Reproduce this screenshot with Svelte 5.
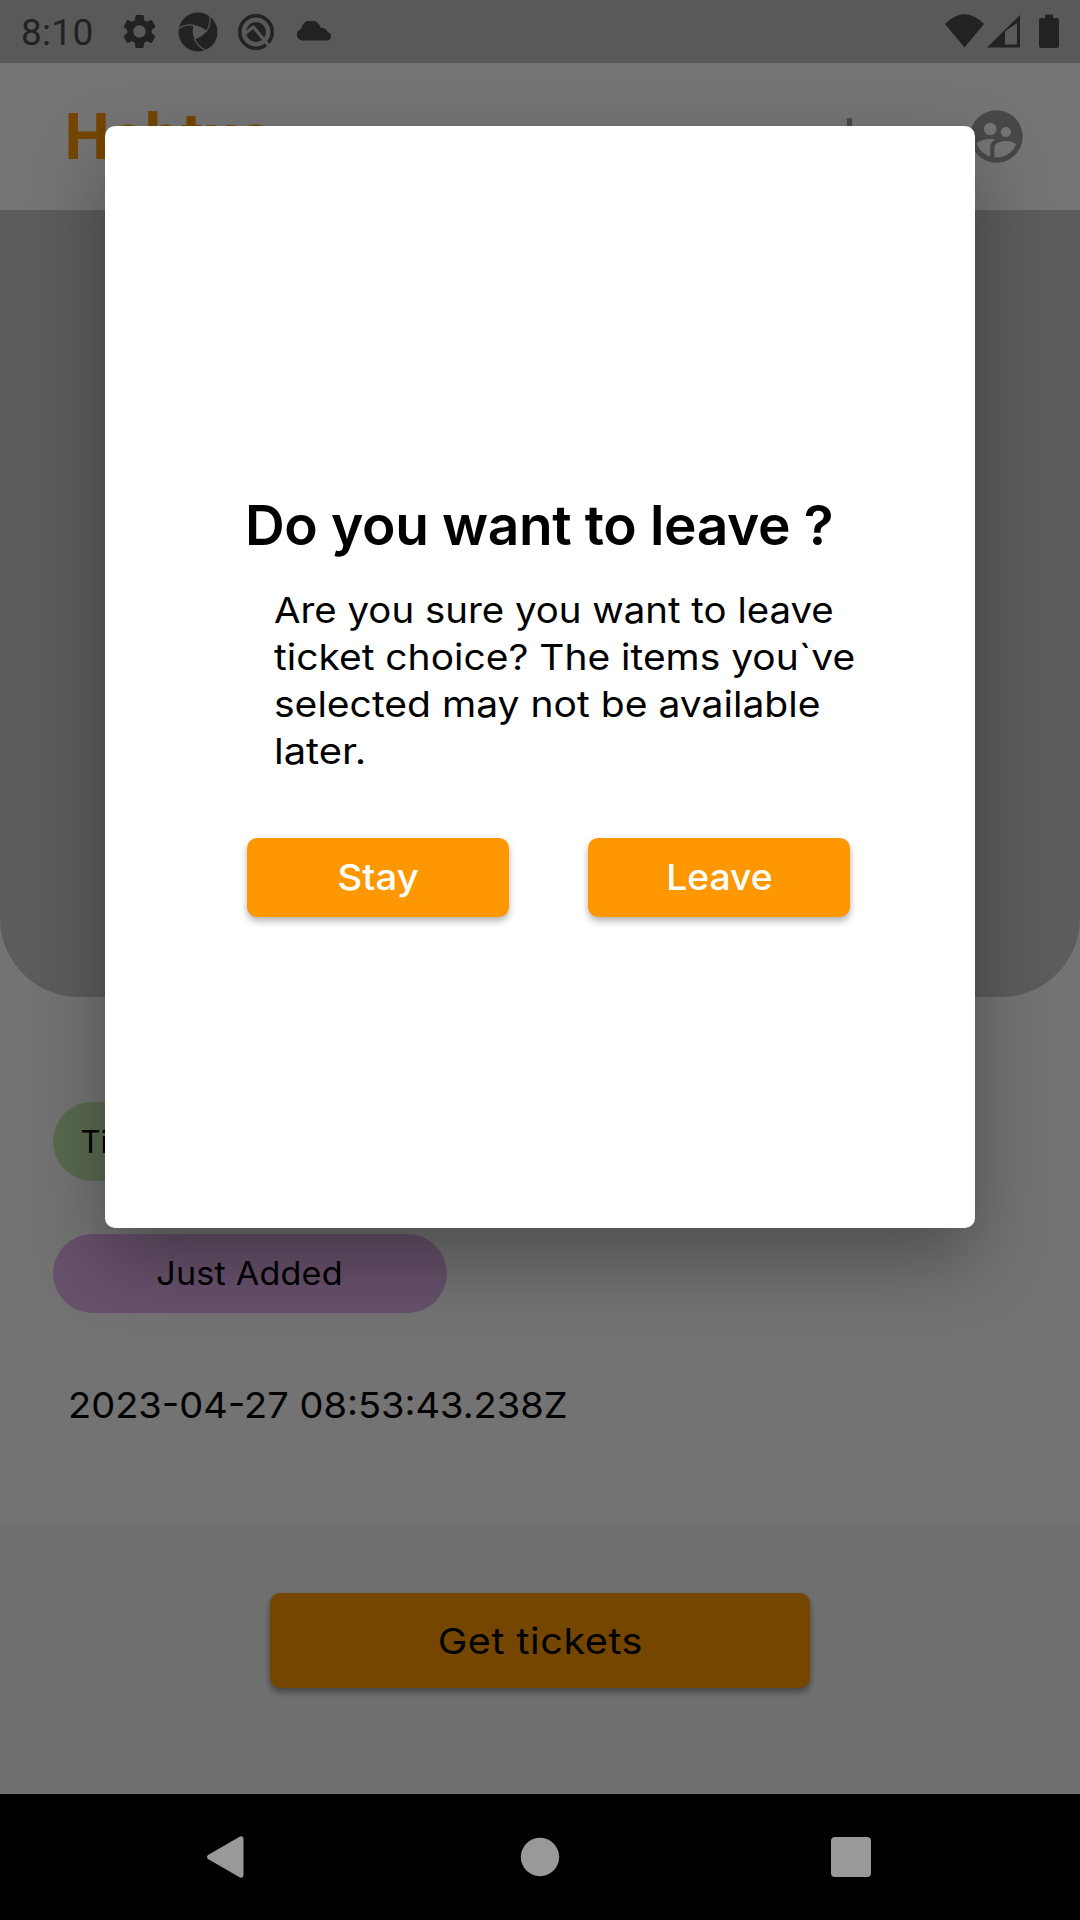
<script>
  const message = [
    { text: 'Are you sure you want to leave', cls: 'l1' },
    { text: 'ticket choice? The items you`ve', cls: 'l2' },
    { text: 'selected may not be available', cls: 'l3' },
    { text: 'later.', cls: 'l4' }
  ];
</script>

<div class="phone">
  <div class="status">
    <span class="time">8:10</span>
    <svg class="gear" viewBox="0 0 24 24"><path d="M19.14 12.94c.04-.3.06-.61.06-.94 0-.32-.02-.64-.07-.94l2.03-1.58c.18-.14.23-.41.12-.61l-1.92-3.32c-.12-.22-.37-.29-.59-.22l-2.39.96c-.5-.38-1.03-.7-1.62-.94l-.36-2.54c-.04-.24-.24-.41-.48-.41h-3.84c-.24 0-.43.17-.47.41l-.36 2.54c-.59.24-1.13.57-1.62.94l-2.39-.96c-.22-.08-.47 0-.59.22L2.74 8.87c-.12.21-.08.47.12.61l2.03 1.58c-.05.3-.09.63-.09.94s.02.64.07.94l-2.03 1.58c-.18.14-.23.41-.12.61l1.92 3.32c.12.22.37.29.59.22l2.39-.96c.5.38 1.03.7 1.62.94l.36 2.54c.05.24.24.41.48.41h3.84c.24 0 .44-.17.47-.41l.36-2.54c.59-.24 1.13-.56 1.62-.94l2.39.96c.22.08.47 0 .59-.22l1.92-3.32c.12-.22.07-.47-.12-.61l-2.01-1.58zM12 15.6c-1.98 0-3.6-1.62-3.6-3.6s1.62-3.6 3.6-3.6 3.6 1.62 3.6 3.6-1.62 3.6-3.6 3.6z" /></svg>
    <svg class="aperture" viewBox="0 0 40 40">
      <circle cx="20" cy="20" r="19.5" />
      <path class="hole" d="M15.500 13.300Q23 14 29 19Q24 25 16.500 27.500Q13.500 20 15.500 13.300Z" />
      <path class="cut" d="M1 16.500Q8 11.500 17 13.500M31.500 3Q33.500 11 28.500 19.500M16.300 27Q20 35 28 38.500" />
    </svg>
    <svg class="quick" viewBox="0 0 40 40">
      <circle class="ring" cx="20" cy="20" r="16.200" />
      <circle cx="20" cy="20" r="10" />
      <path class="slash" d="M9 21.500L17.300 15L33.500 34.500" />
    </svg>
    <svg class="cloud" viewBox="0 0 36 20"><path d="M6 19.500A5.800 5.800 0 0 1 5.300 8.100A9.800 9.800 0 0 1 24.600 6.800A7.500 7.500 0 0 1 31.800 11.300A4.200 4.200 0 0 1 31.500 19.500Z" /></svg>
    <svg class="signals" viewBox="0 0 116 36">
      <path d="M0 10Q19.500 -9.500 39 10L19.500 33.500Z" />
      <path fill-rule="evenodd" d="M42 33.500L75 1V33.500ZM60 17.500V30.500H72V9Z" />
      <path d="M100 0.500H108V4H112Q114 4 114 6V32Q114 34 112 34H96Q94 34 94 32V6Q94 4 96 4H100Z" />
    </svg>
  </div>

  <header>
    <span class="brand">Hebtus</span>
    <div class="actions">
      <svg viewBox="0 0 24 24"><path d="M19 13h-6v6h-2v-6H5v-2h6V5h2v6h6v2z" /></svg>
      <svg viewBox="0 0 24 24"><path d="M11.990 2c-5.520 0-10 4.480-10 10s4.480 10 10 10 10-4.480 10-10-4.480-10-10-10zm3.610 6.340c1.070 0 1.930.86 1.930 1.930s-.86 1.930-1.930 1.930-1.930-.86-1.930-1.930c-.01-1.070.86-1.930 1.930-1.930zm-6-1.580c1.300 0 2.360 1.060 2.360 2.360s-1.060 2.360-2.360 2.360-2.360-1.060-2.360-2.360c0-1.310 1.050-2.360 2.360-2.360zm0 9.130v3.750c-2.400-.75-4.300-2.600-5.140-4.960 1.050-1.120 3.670-1.690 5.140-1.690.53 0 1.200.08 1.900.22-1.640.87-1.900 2.020-1.900 2.680zM11.990 20c-.27 0-.53-.01-.79-.04v-4.070c0-1.420 2.940-2.130 4.400-2.130 1.070 0 2.920.39 3.840 1.150-1.170 2.970-4.060 5.090-7.450 5.090z" /></svg>
    </div>
  </header>

  <main>
    <div class="hero"></div>
    <div class="chips">
      <div class="chip green"><span>Ti</span></div>
      <div class="chip purple"><span>Just Added</span></div>
    </div>
    <p class="date"><span>2023-04-27 08:53:43.238Z</span></p>
  </main>

  <footer><button class="get"><span>Get tickets</span></button></footer>

  <nav>
    <svg viewBox="0 0 1080 126">
      <path d="M208 61L240 42.600Q243.500 41.500 243.500 45V81Q243.500 84.500 240 83.400L208 65Q206 63 208 61Z" />
      <circle cx="540" cy="63" r="19.200" />
      <rect x="831" y="43" width="40" height="40" rx="4" />
    </svg>
  </nav>

  <div class="scrim">
    <div class="dialog" role="dialog">
      <h2>Do you want to leave ?</h2>
      <p class="message">
        {#each message as line}
          <span class={line.cls}>{line.text}</span>
        {/each}
      </p>
      <div class="buttons">
        <button><span class="stay">Stay</span></button>
        <button><span class="leave">Leave</span></button>
      </div>
    </div>
  </div>
</div>

<style>
  :global(body) { margin: 0; }
  .phone {
    position: relative;
    width: 1080px;
    height: 1920px;
    display: flex;
    flex-direction: column;
    overflow: hidden;
    background: #fafafa;
    font-family: Inter, "Open Sans", sans-serif;
    color: #000;
  }
  svg { display: block; flex: none; }
  h2, p { margin: 0; }
  span { white-space: nowrap; }
  button { border: 0; padding: 0; font: inherit; color: inherit; }

  .status {
    height: 63px;
    box-sizing: border-box;
    padding: 0 21px 0 21px;
    display: flex;
    align-items: center;
    background: #c2c2c2;
    fill: #4a4a4a;
    flex: none;
  }
  .time { width: 98px; font: 37px/43px Roboto, sans-serif; color: #4a4a4a; margin-top: 2px; letter-spacing: 0.3px; }
  .gear { width: 41px; height: 41px; }
  .aperture { width: 40px; height: 40px; margin-left: 17.500px; }
  .hole { fill: #c2c2c2; }
  .cut { fill: none; stroke: #c2c2c2; stroke-width: 1.2; }
  .quick { width: 40px; height: 40px; margin-left: 18.500px; }
  .ring { fill: none; stroke: #4a4a4a; stroke-width: 3.5; }
  .slash { fill: none; stroke: #c2c2c2; stroke-width: 3.2; }
  .cloud { width: 36px; height: 20px; margin: 0 0 2px 20px; }
  .signals { width: 116px; height: 36px; margin-left: auto; margin-right: -2px; }

  header {
    height: 147px;
    box-sizing: border-box;
    padding: 0 52px 0 64.500px;
    display: flex;
    align-items: center;
    justify-content: space-between;
    background: #fff;
    flex: none;
  }
  .brand { font: 700 64px/75px Roboto, sans-serif; color: #ff9800; letter-spacing: 0.3px; padding-top: 2px; }
  .actions { display: flex; gap: 84px; fill: #9e9e9e; }
  .actions svg { width: 63px; height: 63px; }

  main { height: 1315px; flex: none; }
  .hero { height: 787px; background: #c8c8c8; border-radius: 0 0 79px 79px; }
  .chips { padding: 105px 52.500px 0; display: flex; flex-direction: column; gap: 52.500px; }
  .chip { width: 394px; height: 79px; border-radius: 40px; display: flex; align-items: center; box-sizing: border-box; }
  .green { background: #c2e5ac; padding-left: 28px; font-size: 31px; }
  .purple { background: #e1b0ea; justify-content: center; font-size: 32px; letter-spacing: 0.2px; }
  .date { padding: 68px 0 0 68px; font-size: 36px; line-height: 48px; }

  /* Slightly widened letterforms */
  .purple span, .date span, .get span, .message span, .buttons span { display: inline-block; transform-origin: 0 50%; }
  .purple span { transform: scaleX(1.065); transform-origin: 50% 50%; }
  .date span { transform: scaleX(1.056); }

  footer { height: 269px; flex: none; background: #f4f4f4; display: flex; justify-content: center; align-items: flex-start; box-sizing: border-box; padding-top: 68px; }
  .get { width: 540px; height: 95px; border-radius: 10px; background: #ff9800; font-size: 36px; letter-spacing: 0.5px; box-shadow: 0 4px 7px rgba(0, 0, 0, 0.4); }
  .get span { transform: scaleX(1.1); transform-origin: 50% 50%; }

  nav { height: 126px; flex: none; background: #000; fill: #999; position: relative; z-index: 2; }

  .scrim {
    position: absolute;
    inset: 0;
    box-sizing: border-box;
    padding: 126px 105px 0;
    background: rgba(0, 0, 0, 0.54);
  }
  .dialog {
    height: 1102px;
    box-sizing: border-box;
    padding: 366px 105px 0 142px;
    border-radius: 10px;
    background: #fff;
    box-shadow: 0 32px 75px rgba(0, 0, 0, 0.32);
  }
  h2 { margin-left: -2px; font-size: 55px; line-height: 66px; font-weight: 600; letter-spacing: -0.35px; white-space: nowrap; }
  .message { display: flex; flex-direction: column; align-items: flex-start; padding: 29px 0 0 27px; font-size: 36px; line-height: 47px; }
  .l1 { transform: scaleX(1.067); }
  .l2 { transform: scaleX(1.082); }
  .l3 { transform: scaleX(1.085); }
  .l4 { transform: scaleX(1.11); }
  .buttons { display: flex; gap: 79px; padding-top: 63px; }
  .buttons button { width: 262px; height: 79px; padding-bottom: 2px; border-radius: 10px; background: #ff9800; color: #fff; font-size: 36px; font-weight: 500; box-shadow: 0 4px 7px rgba(0, 0, 0, 0.3); }
  .buttons span { transform-origin: 50% 50%; }
  .stay { transform: scaleX(1.065); }
  .leave { transform: scaleX(1.035); }
</style>
